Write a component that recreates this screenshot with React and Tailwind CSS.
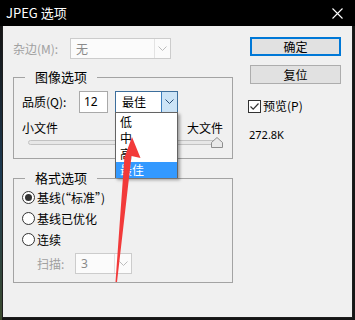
import React from "react";

const F = "font-['Noto_Sans_CJK_SC','Noto_Sans',sans-serif]";

function Chevron({ color = "#a6a6a6" }) {
  return (
    <svg width="9" height="6" viewBox="0 0 9 6">
      <path d="M0.5 0.5 L4.5 4.5 L8.5 0.5" fill="none" stroke={color} strokeWidth="1" />
    </svg>
  );
}

function Radio({ checked }) {
  return (
    <svg width="13" height="13" viewBox="0 0 13 13" className="shrink-0">
      <circle cx="6.5" cy="6.5" r="6" fill="#ffffff" stroke="#333333" strokeWidth="1" />
      {checked && <circle cx="6.5" cy="6.5" r="3.5" fill="#333333" />}
    </svg>
  );
}

export default function App() {
  return (
    <div className={`relative w-[355px] h-[320px] bg-[#161616] overflow-hidden ${F}`}>
      {/* title bar */}
      <div className="h-[26px] bg-black flex items-center justify-between pl-[6px] pr-[12px]">
        <span className="text-white text-[13px] leading-[16px]">JPEG 选项</span>
        <svg width="11" height="11" viewBox="0 0 11 11">
          <path d="M0.5 0.5 L10.5 10.5 M10.5 0.5 L0.5 10.5" stroke="#ffffff" strokeWidth="1.1" />
        </svg>
      </div>
      <div className="flex">
        <div className="w-[2px] h-[294px] bg-gradient-to-b from-[#141414] via-[#1d3a52] to-[#3c4a2e]" />
        <div className="w-[351px] h-[292px] bg-[#f0f0f0] border-l border-r border-b border-[#1e1e1e] flex pl-[10px] pt-[12px]">
          {/* left column */}
          <div className="w-[220px] flex flex-col">
            <div className="h-[21px] flex items-center">
              <span className="w-[57px] text-[12px] leading-[16px] text-[#a0a0a0]">杂边(M):</span>
              <div className="w-[101px] h-[21px] border border-[#cccccc] bg-[#fbfbfb] flex items-center">
                <span className="flex-1 pl-[5px] text-[12px] leading-[16px] text-[#8a8a8a]">无</span>
                <div className="w-[16px] h-full border-l border-[#e3e3e3] flex items-center justify-center">
                  <Chevron color="#bcbcbc" />
                </div>
              </div>
            </div>

            <fieldset className="mt-[10px] border border-[#a3a3a3] pb-[9px]">
              <legend className="ml-[11px] px-[10px] text-[13px] leading-[16px] text-black">图像选项</legend>
              <div className="mt-[6px] pl-[8px] flex items-center h-[22px]">
                <span className="w-[57px] text-[12px] leading-[16px] text-black">品质(Q):</span>
                <div className="w-[29px] h-[22px] border border-[#a9a9a9] bg-white flex items-center pl-[4px] text-[12px] leading-[16px] text-black font-['Noto_Sans',sans-serif]">12</div>
                <div className="ml-[7px] w-[63px] h-[22px] border border-[#3c6e9c] bg-white flex items-center">
                  <span className="flex-1 pl-[6px] text-[12px] leading-[16px] text-black">最佳</span>
                  <div className="w-[16px] h-full bg-[#cce4f7] border-l border-[#3c7fc0] flex items-center justify-center">
                    <Chevron color="#2a4f78" />
                  </div>
                </div>
              </div>
              <div className="mt-[7px] pl-[8px] pr-[9px] flex justify-between text-[12px] leading-[16px] text-black">
                <span>小文件</span>
                <span>大文件</span>
              </div>
              <svg width="196" height="12" viewBox="0 0 196 12" className="ml-[14px] mt-[1px] block">
                <rect x="0.5" y="3.5" width="192" height="4" rx="2" fill="#e7e7e7" stroke="#c2c2c2" />
                <path d="M183.5 10.5 L183.5 5.5 L189 0.5 L194.5 5.5 L194.5 10.5 Z" fill="#e9e9e9" stroke="#8e8e8e" />
              </svg>
            </fieldset>

            <fieldset className="mt-[11px] border border-[#a3a3a3] pb-[8px]">
              <legend className="ml-[11px] px-[10px] text-[13px] leading-[16px] text-black">格式选项</legend>
              <div className="mt-[1px] flex flex-col">
                <div className="h-[21px] pl-[8px] flex items-center gap-[2px] text-[12px] leading-[16px] text-black">
                  <Radio checked />
                  <span>基线(“标准”)</span>
                </div>
                <div className="h-[21px] pl-[8px] flex items-center gap-[2px] text-[12px] leading-[16px] text-black">
                  <Radio />
                  <span>基线已优化</span>
                </div>
                <div className="h-[21px] pl-[8px] flex items-center gap-[2px] text-[12px] leading-[16px] text-black">
                  <Radio />
                  <span>连续</span>
                </div>
              </div>
              <div className="mt-[3px] pl-[23px] h-[21px] flex items-center">
                <span className="w-[38px] text-[12px] leading-[16px] text-[#a0a0a0]">扫描:</span>
                <div className="w-[57px] h-[21px] border border-[#cccccc] bg-[#fbfbfb] flex items-center">
                  <span className="flex-1 pl-[5px] text-[12px] leading-[16px] text-[#8a8a8a] font-['Noto_Sans',sans-serif]">3</span>
                  <div className="w-[17px] h-full border-l border-[#e3e3e3] flex items-center justify-center">
                    <Chevron color="#bcbcbc" />
                  </div>
                </div>
              </div>
            </fieldset>
          </div>

          {/* right column */}
          <div className="ml-[17px] -mt-[1px] w-[91px] flex flex-col">
            <button className="h-[19px] w-[91px] bg-[#e1e1e1] border border-[#0078d7] shadow-[inset_0_0_0_1px_#0078d7] text-[12px] leading-[16px] text-black flex items-center justify-center">确定</button>
            <button className="mt-[9px] h-[19px] w-[91px] bg-[#e1e1e1] border border-[#adadad] text-[12px] leading-[16px] text-black flex items-center justify-center">复位</button>
            <div className="mt-[15px] -ml-[2px] flex items-center gap-[2px] h-[14px]">
              <svg width="13" height="13" viewBox="0 0 13 13" className="shrink-0">
                <rect x="0.5" y="0.5" width="12" height="12" fill="#ffffff" stroke="#333333" />
                <path d="M2.5 6.5 L5.2 9.2 L10.5 3.5" fill="none" stroke="#333333" strokeWidth="1.2" />
              </svg>
              <span className="text-[12px] leading-[16px] text-black">预览(P)</span>
            </div>
            <div className="mt-[15px] -ml-[1px] text-[11px] leading-[14px] text-black font-['Noto_Sans',sans-serif]">272.8K</div>
          </div>
        </div>
      </div>

      {/* open dropdown list */}
      <div className="absolute left-[115px] top-[112px] w-[63px] h-[66px] bg-white border border-[#646464] shadow-[2px_2px_3px_rgba(0,0,0,0.35)] pt-[1px] flex flex-col">
        {["低", "中", "高"].map((t) => (
          <div key={t} className="h-[16px] pl-[4px] flex items-center text-[12px] leading-[16px] text-black">{t}</div>
        ))}
        <div className="h-[16px] pl-[4px] flex items-center text-[12px] leading-[16px] text-white bg-[#3399ff]">最佳</div>
      </div>

      {/* red annotation arrow */}
      <svg className="absolute left-0 top-0 pointer-events-none" width="355" height="320" viewBox="0 0 355 320">
        <polygon points="132,137 140.5,158 131.5,156 117,282 115.5,282 124.5,156 123.5,160" fill="#f23a3a" />
      </svg>
    </div>
  );
}
